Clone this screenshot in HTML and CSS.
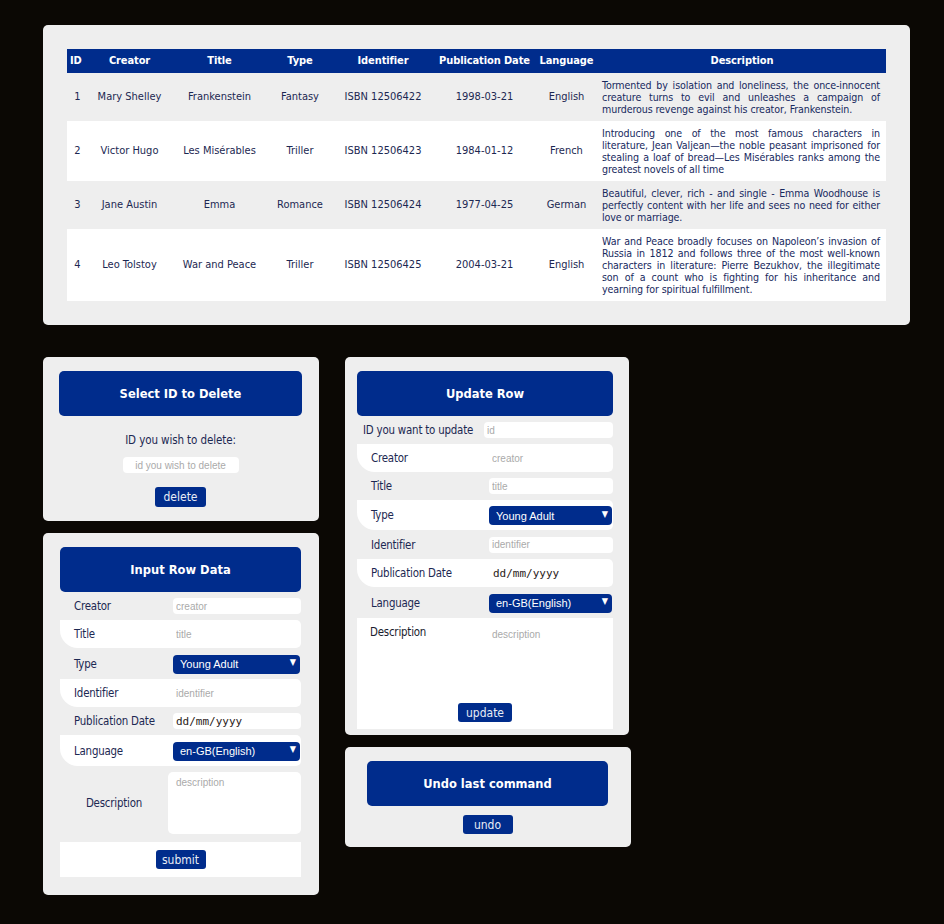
FILE: index.html
```html
<!DOCTYPE html>
<html lang="en">
<head>
<meta charset="utf-8">
<title>Books</title>
<link rel="stylesheet" href="styles.css">
</head>
<body>
<div class="page">
  <section class="panel table-panel">
    <table class="books">
      <colgroup>
        <col class="c-id"><col class="c-creator"><col class="c-title"><col class="c-type"><col class="c-ident"><col class="c-date"><col class="c-lang"><col class="c-desc">
      </colgroup>
      <thead>
        <tr><th>ID</th><th>Creator</th><th>Title</th><th>Type</th><th>Identifier</th><th>Publication Date</th><th>Language</th><th>Description</th></tr>
      </thead>
      <tbody>
        <tr><td>1</td><td>Mary Shelley</td><td>Frankenstein</td><td>Fantasy</td><td>ISBN 12506422</td><td>1998-03-21</td><td>English</td><td class="desc">Tormented by isolation and loneliness, the once-innocent creature turns to evil and unleashes a campaign of murderous revenge against his creator, Frankenstein.</td></tr>
        <tr><td>2</td><td>Victor Hugo</td><td>Les Misérables</td><td>Triller</td><td>ISBN 12506423</td><td>1984-01-12</td><td>French</td><td class="desc">Introducing one of the most famous characters in literature, Jean Valjean—the noble peasant imprisoned for stealing a loaf of bread—Les Misérables ranks among the greatest novels of all time</td></tr>
        <tr><td>3</td><td>Jane Austin</td><td>Emma</td><td>Romance</td><td>ISBN 12506424</td><td>1977-04-25</td><td>German</td><td class="desc">Beautiful, clever, rich - and single - Emma Woodhouse is perfectly content with her life and sees no need for either love or marriage.</td></tr>
        <tr><td>4</td><td>Leo Tolstoy</td><td>War and Peace</td><td>Triller</td><td>ISBN 12506425</td><td>2004-03-21</td><td>English</td><td class="desc">War and Peace broadly focuses on Napoleon’s invasion of Russia in 1812 and follows three of the most well-known characters in literature: Pierre Bezukhov, the illegitimate son of a count who is fighting for his inheritance and yearning for spiritual fulfillment.</td></tr>
      </tbody>
    </table>
  </section>

  <div class="lower">
    <div class="col col-left">
      <section class="panel delete-panel">
        <h2 class="panel-head">Select ID to Delete</h2>
        <p class="delete-label">ID you wish to delete:</p>
        <input class="field delete-field" type="text" placeholder="id you wish to delete">
        <button class="btn btn-delete">delete</button>
      </section>

      <section class="panel input-panel">
        <h2 class="panel-head">Input Row Data</h2>
        <div class="form">
          <div class="row"><label>Creator</label><input class="field" type="text" placeholder="creator"></div>
          <div class="row alt"><label>Title</label><input class="field" type="text" placeholder="title"></div>
          <div class="row sel"><label>Type</label><span class="select"><select><option>Young Adult</option></select></span></div>
          <div class="row alt"><label>Identifier</label><input class="field" type="text" placeholder="identifier"></div>
          <div class="row"><label>Publication Date</label><span class="field date">dd/mm/yyyy</span></div>
          <div class="row alt sel"><label>Language</label><span class="select"><select><option>en-GB(English)</option></select></span></div>
          <div class="row desc-row"><label>Description</label><textarea class="field area" placeholder="description"></textarea></div>
          <div class="submit-row"><button class="btn btn-submit">submit</button></div>
        </div>
      </section>
    </div>

    <div class="col col-mid">
      <section class="panel update-panel">
        <h2 class="panel-head">Update Row</h2>
        <div class="form uform">
          <div class="row idrow"><label>ID you want to update</label><input class="field" type="text" placeholder="id"></div>
          <div class="row alt"><label>Creator</label><input class="field" type="text" placeholder="creator"></div>
          <div class="row"><label>Title</label><input class="field" type="text" placeholder="title"></div>
          <div class="row alt sel"><label>Type</label><span class="select"><select><option>Young Adult</option></select></span></div>
          <div class="row"><label>Identifier</label><input class="field" type="text" placeholder="identifier"></div>
          <div class="row alt"><label>Publication Date</label><span class="field date">dd/mm/yyyy</span></div>
          <div class="row sel"><label>Language</label><span class="select"><select><option>en-GB(English)</option></select></span></div>
          <div class="udesc">
            <div class="udesc-top"><label>Description</label><textarea class="field uarea" placeholder="description"></textarea></div>
            <button class="btn btn-update">update</button>
          </div>
        </div>
      </section>

      <section class="panel undo-panel">
        <h2 class="panel-head">Undo last command</h2>
        <button class="btn btn-undo">undo</button>
      </section>
    </div>
  </div>
</div>
</body>
</html>
```
FILE: styles.css
```css
* { box-sizing: border-box; }
html, body { margin: 0; padding: 0; }
body {
  background: #0b0804;
  font-family: "DejaVu Sans Condensed", "DejaVu Sans", sans-serif;
  color: #1c2852;
  width: 944px;
  height: 924px;
  overflow: hidden;
}
.page { padding: 25px 0 0 43px; }

.panel {
  background: #eeeeee;
  border-radius: 5px;
}

/* ---------- table ---------- */
.table-panel {
  width: 867px;
  padding: 24px;
}
.books {
  width: 819px;
  border-collapse: collapse;
  table-layout: fixed;
  font-size: 11px;
  line-height: 12px;
}
.c-id { width: 21px; }
.c-creator { width: 83px; }
.c-title { width: 97px; }
.c-type { width: 64px; }
.c-ident { width: 102px; }
.c-date { width: 101px; }
.c-lang { width: 63px; }
.c-desc { width: 288px; }
.books th {
  background: #002c8c;
  color: #ffffff;
  font-weight: bold;
  height: 24px;
  padding: 0;
  text-align: center;
  white-space: nowrap;
  letter-spacing: -0.1px;
}
.books th:first-child { text-align: left; padding-left: 3px; }
.books td {
  padding: 6px 0;
  text-align: center;
  vertical-align: middle;
}
.books tbody tr:nth-child(even) { background: #ffffff; }
.books td.desc {
  text-align: justify;
  padding: 6px 6px 6px 4px;
  font-size: 10.6px;
  letter-spacing: -0.1px;
  color: #17295e;
}

/* ---------- lower ---------- */
.lower {
  display: flex;
  gap: 26px;
  margin-top: 32px;
  align-items: flex-start;
}
.col { display: flex; flex-direction: column; gap: 12px; }
.col-left { width: 276px; }
.col-mid { width: 286px; }

.panel-head {
  margin: 0;
  background: #002c8c;
  color: #ffffff;
  border-radius: 5px;
  height: 45px;
  display: flex;
  align-items: center;
  justify-content: center;
  font-family: "DejaVu Sans", sans-serif;
  font-weight: bold;
  font-size: 11.5px;
}

.field {
  border: none;
  outline: none;
  background: #ffffff;
  border-radius: 4px;
  height: 16px;
  padding: 0 3px;
  margin: 0;
  flex: none;
  font-family: "Liberation Sans", Arial, sans-serif;
  font-size: 10px;
  color: #222;
}
.field::placeholder { color: #aaaaaa; }

.btn {
  border: none;
  background: #002c8c;
  color: #e8ecf6;
  border-radius: 3px;
  font-family: "DejaVu Sans Condensed", "DejaVu Sans", sans-serif;
  font-size: 12px;
  height: 20px;
  padding: 0;
}

/* delete panel */
.delete-panel {
  padding: 14px 17px 14px 16px;
  display: flex;
  flex-direction: column;
  align-items: center;
}
.delete-panel .panel-head { width: 243px; }
.delete-label {
  margin: 17px 0 0;
  font-size: 11.5px;
  line-height: 14px;
  letter-spacing: -0.1px;
  color: #1c2852;
}
.delete-field {
  margin-top: 10px;
  width: 116px;
  text-align: center;
}
.btn-delete { margin-top: 14px; width: 51px; }

/* input panel */
.input-panel { padding: 14px 18px 18px 17px; }
.form { display: flex; flex-direction: column; }
.row {
  display: flex;
  align-items: center;
  padding: 6px 0;
  height: 28px;
}
.row label {
  font-size: 11.4px;
  letter-spacing: -0.2px;
  line-height: 14px;
  flex: none;
}
.input-panel .row label {
  width: 113px;
  padding-left: 14px;
}
.input-panel .row .field { width: 128px; }
.row.sel { height: 31px; }
.row.alt {
  background: #ffffff;
  border-radius: 0 5px 5px 18px;
}
.select {
  position: relative;
  display: block;
  flex: none;
}
.input-panel .select { width: 127px; }
.select select {
  appearance: none;
  -webkit-appearance: none;
  width: 100%;
  height: 19px;
  border: none;
  border-radius: 4px;
  background: #002c8c;
  color: #ffffff;
  font-family: "Liberation Sans", Arial, sans-serif;
  font-size: 11px;
  padding: 0 7px;
  outline: none;
}
.select::after {
  content: "▼";
  position: absolute;
  right: 4px;
  top: 3px;
  color: #ffffff;
  font-size: 9px;
  line-height: 12px;
  pointer-events: none;
}
.date {
  display: flex;
  align-items: center;
  font-family: "DejaVu Sans Mono", "Liberation Mono", monospace;
  font-size: 11px;
  color: #2a2218;
}
.row.desc-row { padding: 6px 0 8px; height: 76px; }
.input-panel .desc-row label {
  width: 108px;
  padding-left: 0;
  text-align: center;
}
.input-panel .row .area {
  width: 133px;
  height: 62px;
  resize: none;
  padding: 5px 8px;
  border-radius: 5px;
}
.submit-row {
  background: #ffffff;
  height: 35px;
  display: flex;
  align-items: center;
  justify-content: center;
}
.btn-submit { width: 50px; height: 19px; }

/* update panel */
.update-panel {
  width: 284px;
  padding: 14px 16px 6px 12px;
}
.update-panel .row label {
  width: 132px;
  padding-left: 14px;
}
.update-panel .row .field { width: 124px; }
.update-panel .select { width: 123px; }
.update-panel .row.idrow label { width: 127px; padding-left: 6px; }
.update-panel .row.idrow .field { width: 129px; }
.update-panel .row.sel:nth-child(4) { height: 30px; }
.update-panel .row:nth-child(5) { height: 29px; }
.update-panel .date { padding-left: 4px; }
.udesc {
  background: #ffffff;
  height: 111px;
  display: flex;
  flex-direction: column;
  align-items: center;
}
.udesc-top {
  display: flex;
  width: 100%;
  padding-top: 6px;
  height: 79px;
}
.udesc-top label {
  width: 132px;
  flex: none;
  padding-left: 13px;
  font-size: 11.4px;
  letter-spacing: -0.2px;
  line-height: 16px;
  color: #1a1d2e;
}
.uarea {
  width: 124px;
  height: 67px;
  resize: none;
  padding: 5px 3px;
  border-radius: 0;
}
.btn-update { width: 54px; height: 19px; margin-top: 6px; }

/* undo panel */
.undo-panel {
  padding: 14px 23px 13px 22px;
  display: flex;
  flex-direction: column;
  align-items: center;
}
.undo-panel .panel-head { width: 241px; }
.btn-undo { margin-top: 9px; width: 50px; height: 19px; }
```
